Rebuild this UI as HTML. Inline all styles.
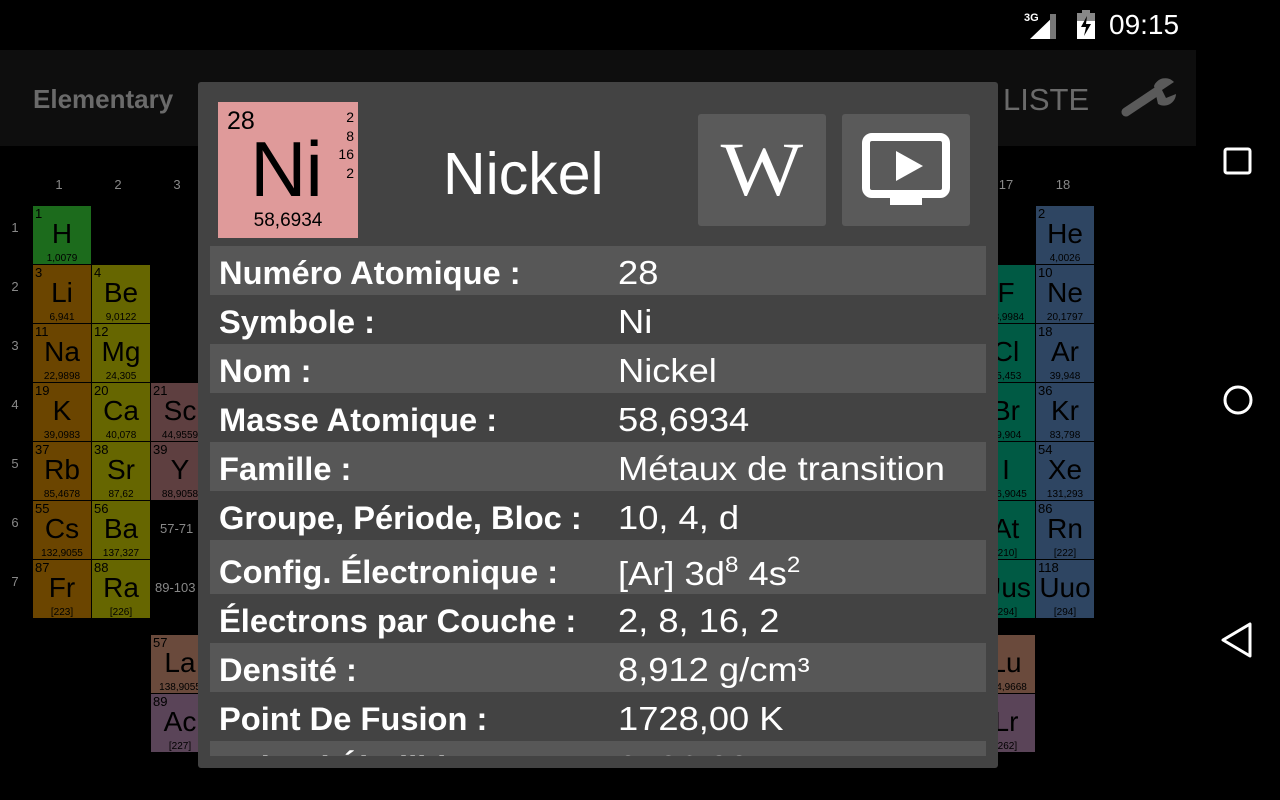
<!DOCTYPE html>
<html><head><meta charset="utf-8">
<style>
*{margin:0;padding:0;box-sizing:border-box}
body{width:1280px;height:800px;background:#000;position:relative;overflow:hidden;font-family:"Liberation Sans",sans-serif}
.a{position:absolute}
.c{position:absolute;width:58px;height:58px;color:#000}
.c .n{position:absolute;left:2px;top:0;font-size:13px}
.c .s{position:absolute;left:0;right:0;top:12px;text-align:center;font-size:28px}
.c .m{position:absolute;left:0;right:0;bottom:0;text-align:center;font-size:10px}
.hd{position:absolute;color:#888;font-size:13px;width:20px;text-align:center}
.row{position:absolute;left:210px;width:776px;height:49px}
.lt{background:#575757}
.lb{position:absolute;left:9px;top:9px;color:#fff;font-weight:bold;font-size:32px;transform:scaleX(1.02);transform-origin:left;white-space:nowrap}
.vl{position:absolute;left:408px;top:8px;color:#fff;font-size:33px;transform:scaleX(1.1);transform-origin:left;white-space:nowrap}
</style></head><body>
<!-- status bar -->
<div class="a" style="left:1024px;top:12px;color:#fff;font-size:11px;font-weight:bold">3G</div>
<svg class="a" style="left:1030px;top:14px" width="30" height="26"><polygon points="0,25 26,0 26,25" fill="#fff"/><rect x="20" y="0" width="6" height="25" fill="#777"/></svg>
<svg class="a" style="left:1076px;top:10px" width="20" height="30"><rect x="6" y="0" width="8" height="3" fill="#888"/><rect x="1" y="3" width="18" height="26" fill="#fff"/><rect x="1" y="3" width="18" height="8" fill="#888"/><polygon points="11,6 5,17 10,17 8,26 15,14 10,14" fill="#000"/></svg>
<div class="a" style="left:1109px;top:9px;color:#fff;font-size:28px">09:15</div>
<!-- action bar -->
<div class="a" style="left:0;top:50px;width:1196px;height:96px;background:#0e0e0e"></div>
<div class="a" style="left:33px;top:84px;color:#6a6a6a;font-size:26px;font-weight:bold">Elementary</div>
<div class="a" style="left:1003px;top:82px;color:#6a6a6a;font-size:31px">LISTE</div>
<svg class="a" style="left:1118px;top:76px" width="60" height="44"><g stroke="#5a5a5a" stroke-width="9" stroke-linecap="round" fill="none"><line x1="8" y1="36" x2="38" y2="16"/></g><path d="M36 10 A12 12 0 0 1 56 6 L44 14 L48 22 L58 18 A12 12 0 0 1 40 28 Z" fill="#5a5a5a"/></svg>
<!-- nav bar -->
<svg class="a" style="left:1196px;top:0" width="84" height="800"><rect x="29" y="149" width="25" height="24" rx="2" fill="none" stroke="#fff" stroke-width="3"/><circle cx="42" cy="400" r="13" fill="none" stroke="#fff" stroke-width="3"/><polygon points="27,640 54,624 54,656" fill="none" stroke="#fff" stroke-width="3" stroke-linejoin="round"/></svg>
<!-- table headers -->
<div class="hd" style="left:49px;top:177px">1</div>
<div class="hd" style="left:108px;top:177px">2</div>
<div class="hd" style="left:167px;top:177px">3</div>
<div class="hd" style="left:996px;top:177px">17</div>
<div class="hd" style="left:1053px;top:177px">18</div>
<div class="hd" style="left:5px;top:220px">1</div>
<div class="hd" style="left:5px;top:279px">2</div>
<div class="hd" style="left:5px;top:338px">3</div>
<div class="hd" style="left:5px;top:397px">4</div>
<div class="hd" style="left:5px;top:456px">5</div>
<div class="hd" style="left:5px;top:515px">6</div>
<div class="hd" style="left:5px;top:574px">7</div>
<div class="a" style="left:160px;top:521px;color:#888;font-size:13px">57-71</div>
<div class="a" style="left:155px;top:580px;color:#888;font-size:13px">89-103</div>
<!-- cells -->
<div class="c" style="left:33px;top:206px;background:#1c6b1c"><span class="n">1</span><span class="s">H</span><span class="m">1,0079</span></div>
<div class="c" style="left:33px;top:265px;background:#6b4500"><span class="n">3</span><span class="s">Li</span><span class="m">6,941</span></div>
<div class="c" style="left:33px;top:324px;background:#6b4500"><span class="n">11</span><span class="s">Na</span><span class="m">22,9898</span></div>
<div class="c" style="left:33px;top:383px;background:#6b4500"><span class="n">19</span><span class="s">K</span><span class="m">39,0983</span></div>
<div class="c" style="left:33px;top:442px;background:#6b4500"><span class="n">37</span><span class="s">Rb</span><span class="m">85,4678</span></div>
<div class="c" style="left:33px;top:501px;background:#6b4500"><span class="n">55</span><span class="s">Cs</span><span class="m">132,9055</span></div>
<div class="c" style="left:33px;top:560px;background:#6b4500"><span class="n">87</span><span class="s">Fr</span><span class="m">[223]</span></div>
<div class="c" style="left:92px;top:265px;background:#666600"><span class="n">4</span><span class="s">Be</span><span class="m">9,0122</span></div>
<div class="c" style="left:92px;top:324px;background:#666600"><span class="n">12</span><span class="s">Mg</span><span class="m">24,305</span></div>
<div class="c" style="left:92px;top:383px;background:#666600"><span class="n">20</span><span class="s">Ca</span><span class="m">40,078</span></div>
<div class="c" style="left:92px;top:442px;background:#666600"><span class="n">38</span><span class="s">Sr</span><span class="m">87,62</span></div>
<div class="c" style="left:92px;top:501px;background:#666600"><span class="n">56</span><span class="s">Ba</span><span class="m">137,327</span></div>
<div class="c" style="left:92px;top:560px;background:#666600"><span class="n">88</span><span class="s">Ra</span><span class="m">[226]</span></div>
<div class="c" style="left:151px;top:383px;background:#5e3f40"><span class="n">21</span><span class="s">Sc</span><span class="m">44,9559</span></div>
<div class="c" style="left:151px;top:442px;background:#5e3f40"><span class="n">39</span><span class="s">Y</span><span class="m">88,9058</span></div>
<div class="c" style="left:151px;top:635px;background:#6a4a3c"><span class="n">57</span><span class="s">La</span><span class="m">138,9055</span></div>
<div class="c" style="left:151px;top:694px;background:#5a4458"><span class="n">89</span><span class="s">Ac</span><span class="m">[227]</span></div>
<div class="c" style="left:977px;top:265px;background:#005a44"><span class="s">F</span><span class="m">18,9984</span></div>
<div class="c" style="left:977px;top:324px;background:#005a44"><span class="s">Cl</span><span class="m">35,453</span></div>
<div class="c" style="left:977px;top:383px;background:#005a44"><span class="s">Br</span><span class="m">79,904</span></div>
<div class="c" style="left:977px;top:442px;background:#005a44"><span class="s">I</span><span class="m">126,9045</span></div>
<div class="c" style="left:977px;top:501px;background:#005a44"><span class="s">At</span><span class="m">[210]</span></div>
<div class="c" style="left:977px;top:560px;background:#005a44"><span class="s">Uus</span><span class="m">[294]</span></div>
<div class="c" style="left:977px;top:635px;background:#6a4a3c"><span class="s">Lu</span><span class="m">174,9668</span></div>
<div class="c" style="left:977px;top:694px;background:#5a4458"><span class="s">Lr</span><span class="m">[262]</span></div>
<div class="c" style="left:1036px;top:206px;background:#2e4562"><span class="n">2</span><span class="s">He</span><span class="m">4,0026</span></div>
<div class="c" style="left:1036px;top:265px;background:#2e4562"><span class="n">10</span><span class="s">Ne</span><span class="m">20,1797</span></div>
<div class="c" style="left:1036px;top:324px;background:#2e4562"><span class="n">18</span><span class="s">Ar</span><span class="m">39,948</span></div>
<div class="c" style="left:1036px;top:383px;background:#2e4562"><span class="n">36</span><span class="s">Kr</span><span class="m">83,798</span></div>
<div class="c" style="left:1036px;top:442px;background:#2e4562"><span class="n">54</span><span class="s">Xe</span><span class="m">131,293</span></div>
<div class="c" style="left:1036px;top:501px;background:#2e4562"><span class="n">86</span><span class="s">Rn</span><span class="m">[222]</span></div>
<div class="c" style="left:1036px;top:560px;background:#2e4562"><span class="n">118</span><span class="s">Uuo</span><span class="m">[294]</span></div>
<!-- dialog -->
<div class="a" style="left:198px;top:82px;width:800px;height:686px;background:#434343;border-radius:3px;overflow:hidden">
</div>
<div class="a" style="left:218px;top:102px;width:140px;height:136px;background:#df9a9a;color:#000">
 <div class="a" style="left:9px;top:5px;font-size:25px">28</div>
 <div class="a" style="left:0;right:4px;top:22px;text-align:center;font-size:78px;letter-spacing:-1px">Ni</div>
 <div class="a" style="right:4px;top:6px;font-size:14px;line-height:18.5px;text-align:right">2<br>8<br>16<br>2</div>
 <div class="a" style="left:0;right:0;bottom:6px;text-align:center;font-size:19px">58,6934</div>
</div>
<div class="a" style="left:443px;top:140px;color:#fff;font-size:59px">Nickel</div>
<div class="a" style="left:698px;top:114px;width:128px;height:112px;background:#5a5a5a;border-radius:3px;color:#fff;font-family:'Liberation Serif',serif;font-size:76px;text-align:center;line-height:112px"><span style="display:inline-block;transform:scaleX(1.15)">W</span></div>
<div class="a" style="left:842px;top:114px;width:128px;height:112px;background:#5a5a5a;border-radius:3px"></div>
<svg class="a" style="left:842px;top:114px" width="128" height="112"><rect x="24" y="23" width="80" height="57" rx="6" fill="none" stroke="#fff" stroke-width="8"/><rect x="48" y="82" width="32" height="9" fill="#fff"/><polygon points="54,37 54,67 81,52" fill="#fff"/></svg>
<div class="a" style="left:210px;top:246px;width:776px;height:510px;overflow:hidden">
<div style="position:relative">
<div class="row lt" style="left:0;top:0"><span class="lb">Numéro Atomique :</span><span class="vl">28</span></div>
<div class="row" style="left:0;top:49px"><span class="lb">Symbole :</span><span class="vl">Ni</span></div>
<div class="row lt" style="left:0;top:98px"><span class="lb">Nom :</span><span class="vl">Nickel</span></div>
<div class="row" style="left:0;top:147px"><span class="lb">Masse Atomique :</span><span class="vl">58,6934</span></div>
<div class="row lt" style="left:0;top:196px"><span class="lb">Famille :</span><span class="vl">Métaux de transition</span></div>
<div class="row" style="left:0;top:245px"><span class="lb">Groupe, Période, Bloc :</span><span class="vl">10, 4, d</span></div>
<div class="row lt" style="left:0;top:294px;height:54px"><span class="lb" style="top:14px">Config. Électronique :</span><span class="vl" style="top:12px">[Ar] 3d<sup style="font-size:22px;vertical-align:13px">8</sup> 4s<sup style="font-size:22px;vertical-align:13px">2</sup></span></div>
<div class="row" style="left:0;top:348px"><span class="lb">Électrons par Couche :</span><span class="vl">2, 8, 16, 2</span></div>
<div class="row lt" style="left:0;top:397px"><span class="lb">Densité :</span><span class="vl">8,912 g/cm³</span></div>
<div class="row" style="left:0;top:446px"><span class="lb">Point De Fusion :</span><span class="vl">1728,00 K</span></div>
<div class="row lt" style="left:0;top:495px"><span class="lb">Point d'Ébullition :</span><span class="vl">3186,00 K</span></div>
</div></div>
</body></html>
